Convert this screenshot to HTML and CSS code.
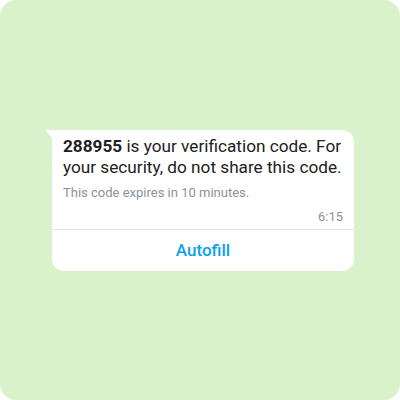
FILE: index.html
```html
<!DOCTYPE html>
<html lang="en">
<head>
  <meta charset="UTF-8" />
  <meta name="viewport" content="width=device-width, initial-scale=1" />
  <title>Verification code</title>
  <link rel="stylesheet" href="styles.css">
</head>
<body>

<div class="frame">
  <div class="bubble">
    <div class="msg">
      <div class="msg-text"><b>288955</b> is your verification code. For your security, do not share this code.</div>
      <div class="msg-note">This code expires in 10 minutes.</div>
      <div class="msg-time">6:15</div>
    </div>
    <div class="action">Autofill</div>
  </div>
</div>

</body>
</html>
```

FILE: styles.css
```css
body {
  margin: 0;
  background: #ffffff;
  font-family: Roboto, 'Liberation Sans', sans-serif;
}
.frame {
  width: 400px;
  height: 400px;
  box-sizing: border-box;
  background: #daf2cc;
  border-radius: 16px;
  padding: 130px 0 0 52px;
}
.bubble {
  position: relative;
  width: 302px;
  background: #ffffff;
  border-radius: 0 12px 12px 12px;
}
.bubble::before {
  content: '';
  position: absolute;
  left: -7px;
  top: 0;
  border-top: 8px solid #ffffff;
  border-left: 7px solid transparent;
}
.msg {
  padding: 6px 11px 4.5px 11px;
  border-bottom: 1px solid #dcefd8;
}
.msg-text {
  font-size: 17.2px;
  line-height: 20.5px;
  color: #1e2022;
}
.msg-text b {
  font-weight: 700;
}
.msg-note {
  margin-top: 7.5px;
  font-size: 13px;
  line-height: 16px;
  color: #8b939a;
}
.msg-time {
  margin-top: 8px;
  font-size: 13px;
  line-height: 16px;
  color: #8b939a;
  text-align: right;
}
.action {
  height: 41px;
  line-height: 41px;
  text-align: center;
  font-size: 17px;
  font-weight: 500;
  color: #0ba2ea;
}
```
